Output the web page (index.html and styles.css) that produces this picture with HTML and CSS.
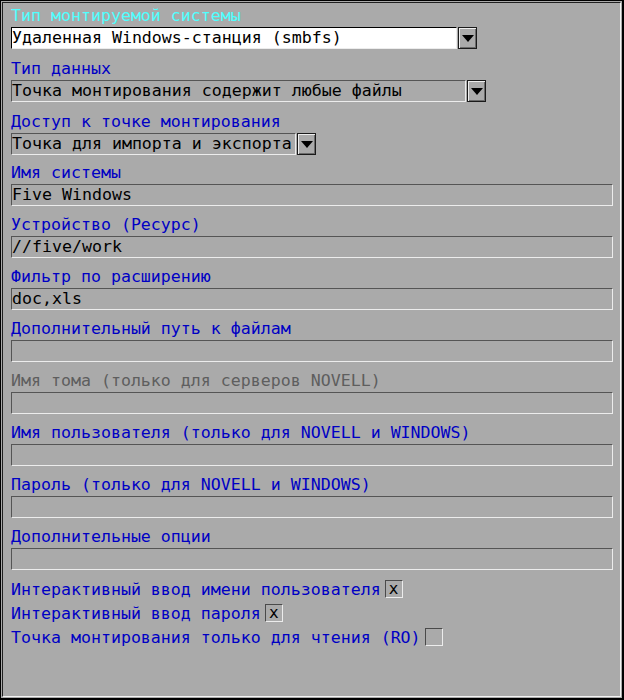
FILE: index.html
```html
<!DOCTYPE html>
<html lang="ru">
<head>
<meta charset="utf-8">
<link rel="stylesheet" href="styles.css">
</head>
<body>
<div class="frame">
  <div class="inner">
    <div class="group sel">
      <div class="label focus">Тип монтируемой системы</div>
      <div class="combo">
        <div class="box white w1">Удаленная Windows-станция (smbfs)</div>
        <div class="btn"><span class="tri"></span></div>
      </div>
    </div>
    <div class="group sel">
      <div class="label">Тип данных</div>
      <div class="combo">
        <div class="box w2">Точка монтирования содержит любые файлы</div>
        <div class="btn"><span class="tri"></span></div>
      </div>
    </div>
    <div class="group sel last">
      <div class="label">Доступ к точке монтирования</div>
      <div class="combo">
        <div class="box w3">Точка для импорта и экспорта</div>
        <div class="btn"><span class="tri"></span></div>
      </div>
    </div>
    <div class="group">
      <div class="label">Имя системы</div>
      <div class="field">Five Windows</div>
    </div>
    <div class="group">
      <div class="label">Устройство (Ресурс)</div>
      <div class="field">//five/work</div>
    </div>
    <div class="group">
      <div class="label">Фильтр по расширению</div>
      <div class="field">doc,xls</div>
    </div>
    <div class="group">
      <div class="label">Дополнительный путь к файлам</div>
      <div class="field"></div>
    </div>
    <div class="group">
      <div class="label disabled">Имя тома (только для серверов NOVELL)</div>
      <div class="field"></div>
    </div>
    <div class="group">
      <div class="label">Имя пользователя (только для NOVELL и WINDOWS)</div>
      <div class="field"></div>
    </div>
    <div class="group">
      <div class="label">Пароль (только для NOVELL и WINDOWS)</div>
      <div class="field"></div>
    </div>
    <div class="group">
      <div class="label">Дополнительные опции</div>
      <div class="field"></div>
    </div>
    <div class="checks">
      <div class="check"><span class="label">Интерактивный ввод имени пользователя</span><span class="cb">x</span></div>
      <div class="check"><span class="label">Интерактивный ввод пароля</span><span class="cb">x</span></div>
      <div class="check"><span class="label">Точка монтирования только для чтения (RO)</span><span class="cb"></span></div>
    </div>
  </div>
</div>
</body>
</html>
```
FILE: styles.css
```css
* { box-sizing: border-box; }
html, body { margin: 0; padding: 0; }
body {
  background: #aaaaaa;
  font-family: "DejaVu Sans Mono", "Liberation Mono", monospace;
  font-size: 16.6px;
  color: #000;
}
.frame {
  width: 624px;
  height: 700px;
  border: 1px solid #000;
  border-right-width: 2px;
  border-bottom-width: 2px;
  padding: 1px;
  background: #aaaaaa;
}
.inner {
  height: 100%;
  border-top: 1px solid #202020;
  border-left: 1px solid #202020;
  border-right: 1px solid #f4f4f4;
  border-bottom: 1px solid #f4f4f4;
  padding: 1px 7px 0 8px;
  display: flex;
  flex-direction: column;
}
.group { margin-bottom: 7px; }
.group.sel { margin-bottom: 8px; }
.group.sel.last { margin-bottom: 6px; }
.label {
  color: #0000c4;
  line-height: 23px;
  height: 23px;
  white-space: pre;
}
.label.focus { color: #50ffff; }
.label.disabled { color: #5e5e5e; }
.field, .box {
  height: 22px;
  line-height: 20px;
  border-top: 1px solid #555;
  border-left: 1px solid #555;
  border-right: 1px solid #ececec;
  border-bottom: 1px solid #ececec;
  white-space: pre;
  overflow: hidden;
}
.field { width: 602px; }
.combo { display: flex; gap: 1px; }
.box.white { background: #fff; border-top-color: #000; border-left-color: #000; }
.w1 { width: 446px; }
.w2 { width: 455px; }
.w3 { width: 285px; }
.btn {
  width: 19px;
  height: 22px;
  border: 1px solid #1a1a1a;
  box-shadow: inset 1px 1px 0 #eeeeee, inset -1px -1px 0 #6a6a6a;
  display: flex;
  align-items: center;
  justify-content: center;
}
.tri {
  width: 0;
  height: 0;
  border-left: 6px solid transparent;
  border-right: 6px solid transparent;
  border-top: 7px solid #000;
  margin-top: 1px;
}
.checks { display: flex; flex-direction: column; }
.check {
  display: flex;
  align-items: center;
  height: 24px;
}
.check .label { height: auto; }
.cb {
  width: 18px;
  height: 18px;
  margin-left: 4px;
  border-top: 1px solid #4a4a4a;
  border-left: 1px solid #4a4a4a;
  border-right: 1px solid #ececec;
  border-bottom: 1px solid #ececec;
  display: flex;
  align-items: center;
  justify-content: center;
  font-size: 16px;
  line-height: 1;
  color: #000;
}
```
